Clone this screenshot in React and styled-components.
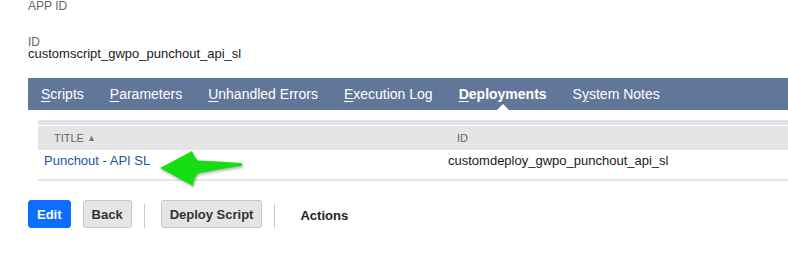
import React from 'react';
import styled, { createGlobalStyle, css } from 'styled-components';

const tabs = [
	{ key: 'S', rest: 'cripts' },
	{ key: 'P', rest: 'arameters' },
	{ key: 'U', rest: 'nhandled Errors' },
	{ key: 'E', rest: 'xecution Log' },
	{ key: 'D', rest: 'eployments', active: true },
	{ pre: 'S', key: 'y', rest: 'stem Notes' },
];

function GreenArrow() {
	return (
		<StyledArrow width="90" height="46" viewBox="0 0 90 46">
			<path
				d="M2 23 L34 6 Q36 12 40 15.5 Q62 16 83 18 Q86 19.5 83 21 Q62 24 40 28.5 Q36 33 35 41 Z"
				fill="#16de12"
			/>
		</StyledArrow>
	);
}

function App() {
	return (
		<>
			<GlobalStyle />
			<StyledPage>
				<StyledLabel $first>APP ID</StyledLabel>
				<StyledLabel>ID</StyledLabel>
				<StyledValue>customscript_gwpo_punchout_api_sl</StyledValue>

				<StyledTabBar>
					{tabs.map((tab) => (
						<StyledTab key={tab.rest} $active={tab.active}>
							{tab.pre}
							<u>{tab.key}</u>
							{tab.rest}
						</StyledTab>
					))}
				</StyledTabBar>

				<StyledTable>
					<StyledHeaderRow>
						<StyledHeaderCell $first>
							TITLE <StyledSort>▲</StyledSort>
						</StyledHeaderCell>
						<StyledHeaderCell>ID</StyledHeaderCell>
					</StyledHeaderRow>
					<StyledDataRow>
						<StyledLink>Punchout - API SL</StyledLink>
						<StyledCell>customdeploy_gwpo_punchout_api_sl</StyledCell>
					</StyledDataRow>
					<GreenArrow />
				</StyledTable>

				<StyledActions>
					<StyledButton $primary>Edit</StyledButton>
					<StyledButton>Back</StyledButton>
					<StyledDivider />
					<StyledButton>Deploy Script</StyledButton>
					<StyledDivider />
					<StyledMenu>Actions</StyledMenu>
				</StyledActions>
			</StyledPage>
		</>
	);
}

const GlobalStyle = createGlobalStyle`
	body {
		margin: 0;
		background: #ffffff;
		font-family: "Liberation Sans", Arial, sans-serif;
	}
`;

const StyledPage = styled.div`
	padding: 0 0 0 28px;
	display: flex;
	flex-direction: column;
	overflow: hidden;
	width: 760px;
`;

const StyledLabel = styled.div`
	font-size: 12px;
	line-height: 12px;
	color: #666666;
	margin-top: ${(props) => (props.$first ? '0' : '24px')};
`;

const StyledValue = styled.div`
	font-size: 13px;
	line-height: 12px;
	color: #1a1a1a;
`;

const StyledTabBar = styled.div`
	margin-top: 18px;
	height: 32px;
	background-color: #607799;
	display: flex;
	align-items: center;
`;

const StyledTab = styled.div`
	position: relative;
	padding: 0 13px;
	height: 32px;
	line-height: 32px;
	font-size: 14px;
	color: #ffffff;
	white-space: nowrap;

	u {
		text-decoration-thickness: 1px;
		text-underline-offset: 2px;
	}

	${(props) =>
		props.$active &&
		css`
			font-weight: bold;

			&::after {
				content: '';
				position: absolute;
				left: 50%;
				bottom: 0;
				margin-left: -6px;
				border-left: 6px solid transparent;
				border-right: 6px solid transparent;
				border-bottom: 6px solid #ffffff;
			}
		`}
`;

const StyledTable = styled.div`
	position: relative;
	margin: 10px 0 0 10px;
	border-top: 5px solid #dfe5ee;
	padding-top: 1px;
	border-bottom: 2px solid #e6e6e6;
`;

const StyledHeaderRow = styled.div`
	display: grid;
	grid-template-columns: 404px 1fr;
	height: 24px;
	background-color: #e5e5e5;
	align-items: center;
`;

const StyledHeaderCell = styled.div`
	padding-left: ${(props) => (props.$first ? '16px' : '15px')};
	font-size: 11px;
	color: #666666;
	display: flex;
	align-items: center;
	gap: 3px;
`;

const StyledSort = styled.span`
	font-size: 9px;
	color: #777777;
`;

const StyledDataRow = styled.div`
	display: grid;
	grid-template-columns: 404px 1fr;
	height: 29px;
	padding-top: 3px;
	box-sizing: border-box;
	font-size: 13px;
	line-height: 15px;
`;

const StyledLink = styled.div`
	padding-left: 6px;
	color: #255599;
`;

const StyledCell = styled.div`
	padding-left: 6px;
	color: #1a1a1a;
`;

const StyledArrow = styled.svg`
	position: absolute;
	left: 120px;
	top: 20px;
	filter: drop-shadow(1px 2px 1px rgba(0, 0, 0, 0.25));
`;

const StyledActions = styled.div`
	margin-top: 19px;
	display: flex;
	align-items: center;
	gap: 12px;
	height: 28px;
`;

const StyledButton = styled.div`
	height: 28px;
	box-sizing: border-box;
	padding: 0 8px;
	border-radius: 3px;
	display: flex;
	align-items: center;
	font-size: 13px;
	font-weight: bold;
	border: 1px solid ${(props) => (props.$primary ? '#0d6efd' : '#c6c6c6')};
	background-color: ${(props) => (props.$primary ? '#0d6efd' : '#e5e5e5')};
	color: ${(props) => (props.$primary ? '#ffffff' : '#333333')};
`;

const StyledDivider = styled.div`
	align-self: flex-end;
	width: 1px;
	height: 24px;
	margin-right: 4px;
	background-color: #cccccc;
`;

const StyledMenu = styled.div`
	padding-left: 9px;
	font-size: 13px;
	font-weight: bold;
	color: #222222;
	margin-top: 3px;
`;

export default App;
